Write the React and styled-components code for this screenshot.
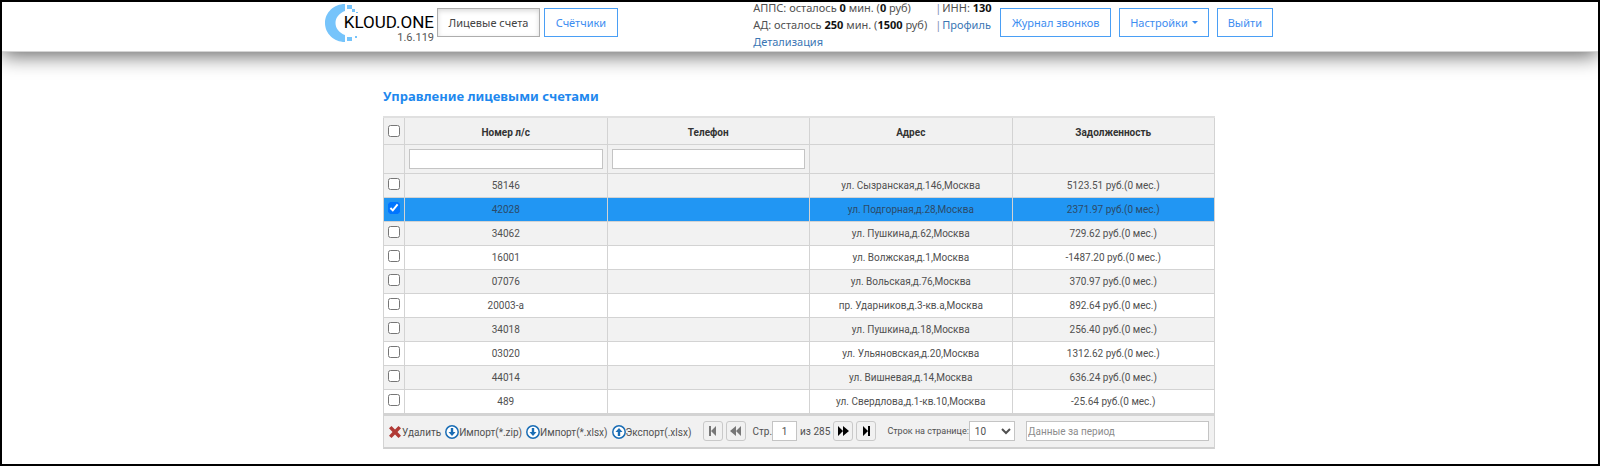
import React, { useState } from "react";
import styled, { createGlobalStyle, css } from "styled-components";

const GlobalStyle = createGlobalStyle`
  *, *::before, *::after { box-sizing: border-box; }
  body {
    margin: 0;
    background: #fff;
    color: #505050;
    font-family: Roboto, "Liberation Sans", sans-serif;
    font-size: 10px;
  }
  button, input, select { font: inherit; color: inherit; margin: 0; }
  a { color: #3a76b4; text-decoration: none; }
`;

const Page = styled.div`
  min-height: 100vh;
  border: 2px solid #000;
  overflow: hidden;
`;

const Header = styled.header`
  position: relative;
  background: #fff;
  border-bottom: 1px solid #d4d4d4;
  box-shadow: 0 4px 20px rgba(0, 0, 0, 0.6);
  font-family: "Noto Sans", sans-serif;
  font-size: 11px;
`;

const HeaderInner = styled.div`
  display: flex;
  align-items: flex-start;
  max-width: 950px;
  height: 49px;
  margin: 0 auto;
  padding: 0 2px 4px 0;
`;

const Logo = styled.a`
  position: relative;
  width: 109px;
  height: 42px;
  margin-right: 3px;
  color: #000;
  font-family: Roboto, sans-serif;
`;

const LogoMark = styled.svg`
  display: block;
  width: 34px;
  height: 42px;
`;

const LogoText = styled.span`
  position: absolute;
  right: 0;
  top: 12px;
  display: flex;
  flex-direction: column;
  align-items: flex-end;
`;

const LogoName = styled.span`
  font-size: 17px;
  line-height: 17px;
`;

const LogoVersion = styled.span`
  color: #555;
  font-size: 11px;
  line-height: 13px;
`;

const Nav = styled.nav`
  display: flex;
  gap: ${(p) => p.$gap};
  padding-top: 6px;
`;

const NavButton = styled.button`
  display: flex;
  align-items: center;
  justify-content: center;
  gap: 4px;
  min-width: ${(p) => p.$min || "0"};
  height: 29px;
  padding: 0 10px;
  border: 1px solid #4a9ff5;
  background: #fff;
  color: #3d8df0;
  white-space: nowrap;
  ${(p) =>
    p.$active &&
    css`
      border-color: #adadad;
      color: #444;
      box-shadow: inset 0 2px 5px rgba(0, 0, 0, 0.15);
    `}
`;

const Caret = styled.span`
  border: 3px solid transparent;
  border-top: 3px solid currentColor;
  border-bottom: 0;
`;

const Balance = styled.div`
  display: grid;
  grid-template-columns: 182px auto;
  align-self: center;
  width: 247px;
  margin-left: auto;
  line-height: 17px;
  white-space: nowrap;
  b { color: #111; }
`;

const Separator = styled.span`
  margin-right: 1px;
  color: #7f8fb5;
`;

const Main = styled.main`
  max-width: 834px;
  margin: 0 auto;
  padding: 34px 2px 0 0;
`;

const Title = styled.h1`
  margin: 0 0 10px;
  color: #1e88ee;
  font-family: "Noto Sans", sans-serif;
  font-size: 13px;
  line-height: 20px;
`;

const Grid = styled.table`
  width: 100%;
  table-layout: fixed;
  border-collapse: collapse;
  border: 1px solid #d3d3d3;
  border-top: 2px solid #e0e0e0;
  text-align: center;
`;

const CheckCol = styled.col`
  width: 21px;
`;

const HeadCell = styled.th`
  height: ${(p) => (p.$filter ? "29px" : "27px")};
  padding: ${(p) => (p.$filter ? "0 4px" : "3px 0 0")};
  border: 1px solid #d3d3d3;
  background: #f1f1f1;
  color: #333;
`;

const HeadCheckCell = styled(HeadCell)`
  padding: 0;
`;

const Row = styled.tr`
  height: 24px;
  background: ${(p) => (p.$selected ? "#2196f3" : "#fff")};
  ${(p) =>
    !p.$selected &&
    css`
      &:nth-child(odd) { background: #f2f2f2; }
    `}
  ${(p) =>
    p.$selected &&
    css`
      color: #2c4a68;
    `}
`;

const Cell = styled.td`
  padding: 1px 0 0;
  border: 1px solid #d3d3d3;
  line-height: 12px;
`;

const CheckCell = styled(Cell)`
  padding-top: 4px;
  vertical-align: top;
`;

const Check = styled.input`
  display: block;
  width: 12px;
  height: 12px;
  margin: 0 auto;
`;

const TextInput = styled.input`
  width: ${(p) => p.$width || "100%"};
  height: 20px;
  padding: 0 1px;
  border: 1px solid #c4c4c4;
  border-radius: 0;
  background: #fff;
  text-align: ${(p) => p.$align || "left"};
  &::placeholder { color: #8c8c8c; opacity: 1; }
`;

const Toolbar = styled.div`
  display: flex;
  align-items: center;
  justify-content: space-between;
  height: 35px;
  padding: 0 5px 0 4px;
  border: 1px solid #d3d3d3;
  border-top: 2px solid #d3d3d3;
  border-bottom: 2px solid #d0d0d0;
  background: #f1f1f1;
  white-space: nowrap;
`;

const Actions = styled.div`
  display: flex;
  gap: 4px;
  padding-top: 2px;
`;

const Action = styled.button`
  display: flex;
  align-items: center;
  padding: 0;
  border: 0;
  background: none;
  svg { display: block; width: 14px; height: 14px; }
`;

const Pager = styled.div`
  display: flex;
  align-items: center;
  gap: 3px;
`;

const PageField = styled.label`
  display: flex;
  align-items: center;
  padding-left: 4px;
`;

const PagerButton = styled.button`
  display: grid;
  place-items: center;
  width: 20px;
  height: 20px;
  padding: 0;
  border: 1px solid #c9c9c9;
  border-radius: 3px;
  background: #f1f1f1;
  color: #000;
  svg { display: block; width: 12px; height: 12px; }
  &:disabled { color: #777; }
`;

const SizeField = styled.label`
  display: flex;
  align-items: center;
  font-size: 9px;
`;

const Select = styled.select`
  width: 46px;
  height: 20px;
  padding: 0 1px;
  border: 1px solid #c4c4c4;
  border-radius: 0;
  background: #fff;
  font-size: 10px;
`;

const rows = [
  ["58146", "ул. Сызранская,д.146,Москва", "5123.51 руб.(0 мес.)"],
  ["42028", "ул. Подгорная,д.28,Москва", "2371.97 руб.(0 мес.)"],
  ["34062", "ул. Пушкина,д.62,Москва", "729.62 руб.(0 мес.)"],
  ["16001", "ул. Волжская,д.1,Москва", "-1487.20 руб.(0 мес.)"],
  ["07076", "ул. Вольская,д.76,Москва", "370.97 руб.(0 мес.)"],
  ["20003-а", "пр. Ударников,д.3-кв.а,Москва", "892.64 руб.(0 мес.)"],
  ["34018", "ул. Пушкина,д.18,Москва", "256.40 руб.(0 мес.)"],
  ["03020", "ул. Ульяновская,д.20,Москва", "1312.62 руб.(0 мес.)"],
  ["44014", "ул. Вишневая,д.14,Москва", "636.24 руб.(0 мес.)"],
  ["489", "ул. Свердлова,д.1-кв.10,Москва", "-25.64 руб.(0 мес.)"],
];

const CloudMark = () => (
  <LogoMark viewBox="0 0 34 42" aria-hidden="true">
    <path
      d="M20 2C9 2 0 10.500 0 21S9 40 20 40V33C14.500 31 10.500 26.500 10.500 21S14.500 11 20 9Z"
      fill="#76c4fb"
    />
    <path
      d="M22 3h5v4h-5zM27 7h3v3h-3zM31 10h2v1h-2zM22 35h5v4h-5zM30 34h2v2h-2z"
      fill="#76c4fb"
    />
  </LogoMark>
);

const CrossIcon = () => (
  <svg viewBox="0 0 14 14" aria-hidden="true">
    <path
      d="M3.500 1 7 4.500 10.500 1 13 3.300 9.500 7 13 10.700 10.500 13 7 9.500 3.500 13 1 10.700 4.500 7 1 3.300Z"
      fill="#b03a35"
    />
  </svg>
);

const ArrowIcon = ({ up }) => (
  <svg viewBox="0 0 14 14" aria-hidden="true">
    <circle cx="7" cy="7" r="6.200" fill="#fff" stroke="#1a6db5" strokeWidth="1.500" />
    <path
      d={up ? "M7 3 10.500 7H8.200V11H5.800V7H3.500Z" : "M7 11 10.500 7H8.200V3H5.800V7H3.500Z"}
      fill="#1a6db5"
    />
  </svg>
);

const pagerPaths = {
  first: "M2 1h2v10H2zM9 1v10L4 6z",
  prev: "M6 1v10L0 6zM11 1v10L6 6z",
  next: "M1 1v10l5-5zM6 1v10L12 6z",
  last: "M3 1v10l5-5zM8 1h2v10H8z",
};

const PagerIcon = ({ kind }) => (
  <svg viewBox="0 0 12 12" aria-hidden="true">
    <path d={pagerPaths[kind]} fill="currentColor" />
  </svg>
);

export default function App() {
  const [selected, setSelected] = useState(["42028"]);
  const toggle = (id) =>
    setSelected((s) => (s.includes(id) ? s.filter((x) => x !== id) : [...s, id]));
  const all = selected.length === rows.length;

  return (
    <Page>
      <GlobalStyle />
      <Header>
        <HeaderInner>
          <Logo href="#">
            <CloudMark />
            <LogoText>
              <LogoName>KLOUD.ONE</LogoName>
              <LogoVersion>1.6.119</LogoVersion>
            </LogoText>
          </Logo>
          <Nav $gap="4px">
            <NavButton $active $min="103px">Лицевые счета</NavButton>
            <NavButton $min="74px">Счётчики</NavButton>
          </Nav>
          <Balance>
            <span>АППС: осталось <b>0</b> мин. (<b>0</b> руб)</span>
            <span><Separator>|</Separator>ИНН: <b>130</b></span>
            <span>АД: осталось <b>250</b> мин. (<b>1500</b> руб)</span>
            <span><Separator>|</Separator><a href="#profile">Профиль</a></span>
            <a href="#details">Детализация</a>
          </Balance>
          <Nav $gap="8px">
            <NavButton $min="111px">Журнал звонков</NavButton>
            <NavButton>Настройки <Caret /></NavButton>
            <NavButton>Выйти</NavButton>
          </Nav>
        </HeaderInner>
      </Header>
      <Main>
        <Title>Управление лицевыми счетами</Title>
        <Grid>
          <colgroup>
            <CheckCol />
            <col />
            <col />
            <col />
            <col />
          </colgroup>
          <thead>
            <tr>
              <HeadCheckCell>
                <Check
                  type="checkbox"
                  aria-label="Выбрать все"
                  checked={all}
                  onChange={() => setSelected(all ? [] : rows.map((r) => r[0]))}
                />
              </HeadCheckCell>
              <HeadCell>Номер л/с</HeadCell>
              <HeadCell>Телефон</HeadCell>
              <HeadCell>Адрес</HeadCell>
              <HeadCell>Задолженность</HeadCell>
            </tr>
            <tr>
              <HeadCell as="td" $filter />
              <HeadCell as="td" $filter><TextInput aria-label="Номер л/с" /></HeadCell>
              <HeadCell as="td" $filter><TextInput aria-label="Телефон" /></HeadCell>
              <HeadCell as="td" $filter />
              <HeadCell as="td" $filter />
            </tr>
          </thead>
          <tbody>
            {rows.map(([id, address, debt]) => (
              <Row key={id} $selected={selected.includes(id)}>
                <CheckCell>
                  <Check
                    type="checkbox"
                    aria-label={id}
                    checked={selected.includes(id)}
                    onChange={() => toggle(id)}
                  />
                </CheckCell>
                <Cell>{id}</Cell>
                <Cell />
                <Cell>{address}</Cell>
                <Cell>{debt}</Cell>
              </Row>
            ))}
          </tbody>
        </Grid>
        <Toolbar>
          <Actions>
            <Action><CrossIcon />Удалить</Action>
            <Action><ArrowIcon />Импорт(*.zip)</Action>
            <Action><ArrowIcon />Импорт(*.xlsx)</Action>
            <Action><ArrowIcon up />Экспорт(.xlsx)</Action>
          </Actions>
          <Pager>
            <PagerButton disabled aria-label="Первая"><PagerIcon kind="first" /></PagerButton>
            <PagerButton disabled aria-label="Предыдущая"><PagerIcon kind="prev" /></PagerButton>
            <PageField>
              Стр.
              <TextInput $width="25px" $align="center" defaultValue="1" />
            </PageField>
            <span>из 285</span>
            <PagerButton aria-label="Следующая"><PagerIcon kind="next" /></PagerButton>
            <PagerButton aria-label="Последняя"><PagerIcon kind="last" /></PagerButton>
          </Pager>
          <SizeField>
            Строк на странице:
            <Select defaultValue="10">
              <option>10</option>
              <option>20</option>
              <option>50</option>
            </Select>
          </SizeField>
          <TextInput $width="183px" placeholder="Данные за период" aria-label="Данные за период" />
        </Toolbar>
      </Main>
    </Page>
  );
}
